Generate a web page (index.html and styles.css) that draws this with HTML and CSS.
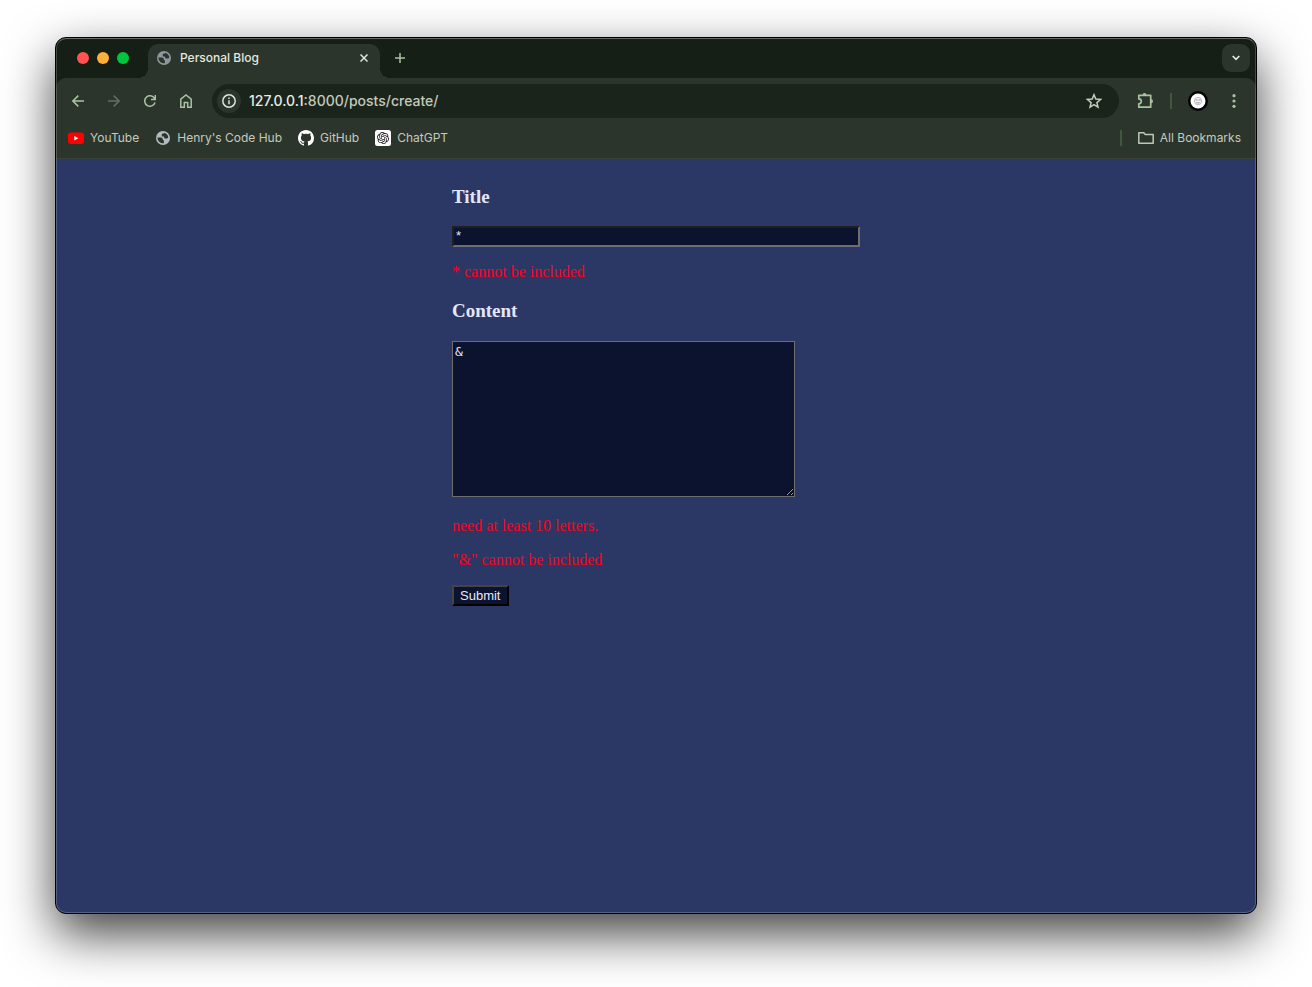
FILE: index.html
```html
<!DOCTYPE html>
<html lang="en">
<head>
<meta charset="utf-8">
<title>Personal Blog</title>
<link rel="stylesheet" href="styles.css">
</head>
<body>
<svg class="defs" aria-hidden="true">
  <symbol id="globe" viewBox="0 0 14 14">
    <circle cx="7" cy="7" r="7" fill="currentColor"/>
    <path class="land" d="M1.400 6.600h3.300c1.300 0 2.200.9 2.200 2.100v.6h1v2.900A5.600 5.600 0 0 1 1.400 6.600zM8.300 1.800c2.200.6 3.800 2.300 4 4.600-.4.700-1 1-1.700 1H9.500c-1 0-1.500-.6-1.500-1.500v-.5H5.800V4c0-.9.600-1.400 1.400-1.400h1.100z"/>
  </symbol>
</svg>
<div class="window">
  <header class="chrome">
    <div class="tabstrip">
      <div class="lights"><span class="light red"></span><span class="light amber"></span><span class="light green"></span></div>
      <div class="tab">
        <svg class="favicon grey" width="14" height="14"><use href="#globe"/></svg>
        <span class="tab-title">Personal Blog</span>
        <button class="plain" aria-label="Close tab"><svg width="8" height="8" viewBox="0 0 8 8"><path d="M.5.5l7 7M7.500.5l-7 7" stroke="#e0e6dc" stroke-width="1.500"/></svg></button>
      </div>
      <button class="plain new-tab" aria-label="New tab"><svg width="10" height="10" viewBox="0 0 10 10"><path d="M5 0v10M0 5h10" stroke="#a9c3a2" stroke-width="1.500"/></svg></button>
      <button class="plain tab-search" aria-label="Search tabs"><svg width="8" height="6" viewBox="0 0 8 6"><path d="M.7 1L4 4.300 7.300 1" fill="none" stroke="#e3e9df" stroke-width="1.700"/></svg></button>
    </div>
    <div class="toolbar">
      <nav class="nav">
        <button class="plain" aria-label="Back"><svg width="12" height="12" viewBox="0 0 12 12"><path d="M12 6H1M6.300.6L.9 6l5.400 5.400" fill="none" stroke="#a9c3a2" stroke-width="1.500"/></svg></button>
        <button class="plain" aria-label="Forward"><svg width="12" height="12" viewBox="0 0 12 12"><path d="M0 6h11M5.700.6L11.100 6l-5.400 5.400" fill="none" stroke="#626f60" stroke-width="1.500"/></svg></button>
        <button class="plain" aria-label="Reload"><svg width="12" height="12" viewBox="0 0 12 12"><path d="M11 7.500A5.250 5.250 0 1 1 10.300 3l.9 1.200M11.300 0v4.500H7" fill="none" stroke="#a9c3a2" stroke-width="1.500"/></svg></button>
        <button class="plain" aria-label="Home"><svg width="12" height="14" viewBox="0 0 12 14"><path d="M.8 5.200L6 1l5.200 4.200v8H7.700V8.400H4.300v4.800H.8z" fill="none" stroke="#a9c3a2" stroke-width="1.500"/></svg></button>
      </nav>
      <div class="address">
        <button class="plain site-info" aria-label="Site information"><svg width="14" height="14" viewBox="0 0 14 14"><circle cx="7" cy="7" r="6.200" fill="none" stroke="#dfe5da" stroke-width="1.500"/><path d="M7 6.200v4M7 3.500V5" stroke="#dfe5da" stroke-width="1.500"/></svg></button>
        <span class="url"><b>127.0.0.1</b>:8000/posts/create/</span>
        <button class="plain" aria-label="Bookmark this page"><svg width="16" height="16" viewBox="0 0 16 16"><path d="M8 1.700l1.800 4.400 4.700.4-3.600 3.100 1.100 4.600L8 11.700l-4 2.500 1.100-4.600L1.500 6.500l4.700-.4z" fill="none" stroke="#c4ccbf" stroke-width="1.500"/></svg></button>
      </div>
      <div class="actions">
        <button class="plain" aria-label="Extensions"><svg width="17" height="16" viewBox="0 0 17 16"><path d="M1.800 2.300h11.900v11.900H1.800v-3.300a2.500 2.500 0 0 0 0-5z" fill="none" stroke="#a9c3a2" stroke-width="1.700" stroke-linejoin="round"/><path d="M5.500 2a2 2 0 0 1 4 0zM14 6.200a2 2 0 0 1 0 4z" fill="#a9c3a2"/></svg></button>
        <span class="divider"></span>
        <button class="plain profile" aria-label="Profile"><svg width="20" height="20" viewBox="0 0 20 20"><circle cx="10" cy="10" r="10" fill="#000"/><circle cx="10" cy="10" r="7.500" fill="#fff"/><circle cx="10" cy="10" r="3.700" fill="#f2f2f2" stroke="#999" stroke-width=".6"/><path d="M7.500 9h2M10.500 9h2M8.300 11.500q1.700 1.300 3.400 0" fill="none" stroke="#777" stroke-width=".7"/></svg></button>
        <button class="plain" aria-label="Menu"><svg width="4" height="14" viewBox="0 0 4 14" fill="#a9c3a2"><circle cx="2" cy="1.700" r="1.600"/><circle cx="2" cy="7" r="1.600"/><circle cx="2" cy="12.300" r="1.600"/></svg></button>
      </div>
    </div>
    <div class="bookmarks">
      <a class="bookmark" href="#"><svg width="16" height="16" viewBox="0 0 16 16"><rect y="2.500" width="16" height="11.400" rx="2.800" fill="#f00"/><path d="M6.300 5.900v4.600l4-2.300z" fill="#fff"/></svg>YouTube</a>
      <a class="bookmark" href="#"><svg class="favicon" width="16" height="16" viewBox="-1 -1 16 16"><use href="#globe" width="14" height="14"/></svg>Henry's Code Hub</a>
      <a class="bookmark" href="#"><svg width="16" height="16" viewBox="0 0 16 16"><path fill="#fff" d="M8 0C3.580 0 0 3.580 0 8c0 3.540 2.290 6.530 5.470 7.590.4.070.55-.17.55-.38 0-.19-.01-.82-.01-1.490-2.010.37-2.530-.49-2.690-.94-.09-.23-.48-.94-.82-1.130-.28-.15-.68-.52-.01-.53.63-.01 1.080.58 1.230.82.72 1.210 1.870.87 2.330.66.070-.52.280-.87.510-1.070-1.780-.2-3.640-.89-3.640-3.950 0-.87.310-1.590.82-2.150-.08-.2-.36-1.020.08-2.120 0 0 .67-.21 2.200.82.640-.18 1.320-.27 2-.27s1.360.09 2 .27c1.530-1.040 2.200-.82 2.200-.82.440 1.100.160 1.920.080 2.120.510.560.820 1.270.820 2.150 0 3.070-1.870 3.750-3.650 3.950.290.250.540.730.540 1.480 0 1.070-.01 1.930-.01 2.200 0 .21.150.460.550.380A8.010 8.010 0 0 0 16 8c0-4.420-3.580-8-8-8z"/></svg>GitHub</a>
      <a class="bookmark" href="#"><svg width="16" height="16" viewBox="0 0 32 32"><rect width="32" height="32" rx="5" fill="#fff"/><path transform="translate(4 4)" fill="#111" d="M22.2819 9.8211a5.9847 5.9847 0 0 0-.5157-4.9108 6.0462 6.0462 0 0 0-6.5098-2.9A6.0651 6.0651 0 0 0 4.9807 4.1818a5.9847 5.9847 0 0 0-3.9977 2.9 6.0462 6.0462 0 0 0 .7427 7.0966 5.98 5.98 0 0 0 .511 4.9107 6.051 6.051 0 0 0 6.5146 2.9001A5.9847 5.9847 0 0 0 13.2599 24a6.0557 6.0557 0 0 0 5.7718-4.2058 5.9894 5.9894 0 0 0 3.9977-2.9001 6.0557 6.0557 0 0 0-.7475-7.0729zm-9.022 12.6081a4.4755 4.4755 0 0 1-2.8764-1.0408l.1419-.0804 4.7783-2.7582a.7948.7948 0 0 0 .3927-.6813v-6.7369l2.02 1.1686a.071.071 0 0 1 .038.052v5.5826a4.504 4.504 0 0 1-4.4945 4.4944zm-9.6607-4.1254a4.4708 4.4708 0 0 1-.5346-3.0137l.142.0852 4.783 2.7582a.7712.7712 0 0 0 .7806 0l5.8428-3.3685v2.3324a.0804.0804 0 0 1-.0332.0615L9.74 19.9502a4.4992 4.4992 0 0 1-6.1408-1.6464zM2.3408 7.8956a4.485 4.485 0 0 1 2.3655-1.9728V11.6a.7664.7664 0 0 0 .3879.6765l5.8144 3.3543-2.0201 1.1685a.0757.0757 0 0 1-.071 0l-4.8303-2.7865A4.504 4.504 0 0 1 2.3408 7.872zm16.5963 3.8558L13.1038 8.364 15.1192 7.2a.0757.0757 0 0 1 .071 0l4.8303 2.7913a4.4944 4.4944 0 0 1-.6765 8.1042v-5.6772a.79.79 0 0 0-.407-.667zm2.0107-3.0231l-.142-.0852-4.7735-2.7818a.7759.7759 0 0 0-.7854 0L9.409 9.2297V6.8974a.0662.0662 0 0 1 .0284-.0615l4.8303-2.7866a4.4992 4.4992 0 0 1 6.6802 4.66zM8.3065 12.863l-2.02-1.1638a.0804.0804 0 0 1-.038-.0567V6.0742a4.4992 4.4992 0 0 1 7.3757-3.4537l-.142.0805L8.704 5.459a.7948.7948 0 0 0-.3927.6813zm1.0976-2.3654l2.602-1.4998 2.6069 1.4998v2.9994l-2.5974 1.4997-2.6067-1.4997Z"/></svg>ChatGPT</a>
      <span class="divider last"></span>
      <a class="bookmark" href="#"><svg width="16" height="12" viewBox="0 0 16 12"><path d="M.8.800h5l1.500 1.600h7.900v8.800H.8z" fill="none" stroke="#bdc8b8" stroke-width="1.500" stroke-linejoin="round"/></svg>All Bookmarks</a>
    </div>
  </header>
  <main class="page">
    <form class="post-form">
      <label class="heading" for="title">Title</label>
      <input class="field" id="title" type="text" value="*">
      <p class="error">* cannot be included</p>
      <label class="heading" for="content">Content</label>
      <textarea class="area" id="content" rows="10" cols="40">&amp;</textarea>
      <p class="error">need at least 10 letters.</p>
      <p class="error">"&amp;" cannot be included</p>
      <button class="submit" type="button">Submit</button>
    </form>
  </main>
</div>
</body>
</html>
```
FILE: styles.css
```css
* { box-sizing: border-box; }
body {
  margin: 0;
  min-height: 100vh;
  padding: 37px 55px 73px;
  display: flex;
  background: #fff;
  font-family: Inter, "Liberation Sans", sans-serif;
}
.defs { position: absolute; width: 0; height: 0; }
svg { display: block; flex: none; }
.window {
  position: relative;
  flex: 1;
  min-width: 0;
  display: flex;
  flex-direction: column;
  overflow: hidden;
  border: 1px solid #000;
  border-radius: 11px;
  background: #2b3865;
  box-shadow: 0 20px 50px rgba(0, 0, 0, .75);
}
.window::after {
  content: "";
  position: absolute;
  inset: 0;
  border: 1px solid rgba(255, 255, 255, .2);
  border-top-color: rgba(255, 255, 255, .35);
  border-radius: 10px;
  pointer-events: none;
}
.chrome { background: #151f15; border-bottom: 1px solid #3b4035; }
.plain {
  display: flex;
  align-items: center;
  justify-content: center;
  padding: 0;
  border: 0;
  background: none;
}

.tabstrip { display: flex; align-items: center; height: 40px; padding: 0 6px 0 21px; }
.lights { display: flex; gap: 8px; margin-right: 19px; }
.light { width: 12px; height: 12px; border-radius: 50%; }
.red { background: #ff5450; }
.amber { background: #ffb03a; }
.green { background: #00c63f; }
.tab {
  position: relative;
  align-self: flex-end;
  display: flex;
  align-items: center;
  width: 232px;
  height: 34px;
  padding: 0 12px 6px 9px;
  border-radius: 10px 10px 0 0;
  background: #2c352b;
}
.tab::before, .tab::after {
  content: "";
  position: absolute;
  bottom: 0;
  width: 10px;
  height: 10px;
}
.tab::before { left: -10px; background: radial-gradient(circle at 0 0, transparent 10px, #2c352b 10px); }
.tab::after { right: -10px; background: radial-gradient(circle at 100% 0, transparent 10px, #2c352b 10px); }
.favicon { color: #b3bbc1; }
.grey { color: #8f979d; }
.land { fill: #2c352b; }
.tab-title { flex: 1; margin-left: 9px; font-size: 12px; line-height: 16px; font-weight: 500; color: #e2e8de; }
.new-tab { margin-left: 15px; }
.tab-search { width: 28px; height: 28px; margin-left: auto; border-radius: 9px; background: #2c352b; }

.toolbar {
  display: flex;
  align-items: center;
  height: 46px;
  padding: 0 20px 0 16px;
  border-radius: 10px 10px 0 0;
  background: #2c352b;
}
.nav { display: flex; align-items: center; gap: 24px; }
.address {
  flex: 1;
  display: flex;
  align-items: center;
  height: 34px;
  margin: 0 18px 0 20px;
  padding: 0 17px 0 5px;
  border-radius: 17px;
  background: #1b241b;
}
.site-info { width: 24px; height: 24px; border-radius: 50%; background: #2c352b; }
.url { flex: 1; margin-left: 8px; font-size: 14px; line-height: 18px; font-weight: 500; color: #c3cabe; }
.url b { font-weight: 500; color: #e6ebe2; }
.actions { display: flex; align-items: center; }
.divider { width: 2px; height: 16px; margin: 0 16px; background: #435640; }
.profile { margin-right: 24px; }

.bookmarks {
  display: flex;
  align-items: center;
  gap: 16px;
  height: 34px;
  padding: 0 15px 6px 12px;
  background: #2c352b;
}
.bookmark {
  display: flex;
  align-items: center;
  gap: 6px;
  font-size: 12px;
  line-height: 16px;
  color: #c3cbbe;
  text-decoration: none;
  white-space: nowrap;
}
.last { margin: 0 0 0 auto; }

.page { flex: 1; background: #2b3865; }
.post-form {
  display: flex;
  flex-direction: column;
  align-items: flex-start;
  width: 34%;
  margin: 0 auto;
  padding: 27px 0;
  font-family: "Liberation Serif", serif;
  font-size: 16px;
}
.heading { margin-bottom: 19px; font-size: 19px; line-height: 21px; font-weight: 700; color: #e6e6fa; }
.field {
  width: 100%;
  height: 21px;
  padding: 0 2px 2px;
  border: 2px solid;
  border-color: #1f1f1f #6e6e6e #6e6e6e #1f1f1f;
  background: #0c132e;
  font: 13px "Liberation Sans", sans-serif;
  color: #e6e6fa;
}
.error { margin: 16px 0 0; line-height: 18px; color: #fa001a; }
.error + .heading { margin-top: 19px; }
.area {
  width: 343px;
  height: 156px;
  max-width: 100%;
  margin: 1px 0 4px;
  padding: 2px;
  border: 1px solid #6e6e6e;
  background: #0c132e;
  font: 13px "DejaVu Sans Mono", monospace;
  color: #e6e6fa;
  color-scheme: dark;
}
.submit {
  height: 21px;
  margin-top: 16px;
  padding: 0 7px 0 6px;
  border: 2px solid;
  border-color: #444 #000 #000 #444;
  background: #0c132e;
  font: 13px "Liberation Sans", sans-serif;
  color: #e6e6fa;
}
```
